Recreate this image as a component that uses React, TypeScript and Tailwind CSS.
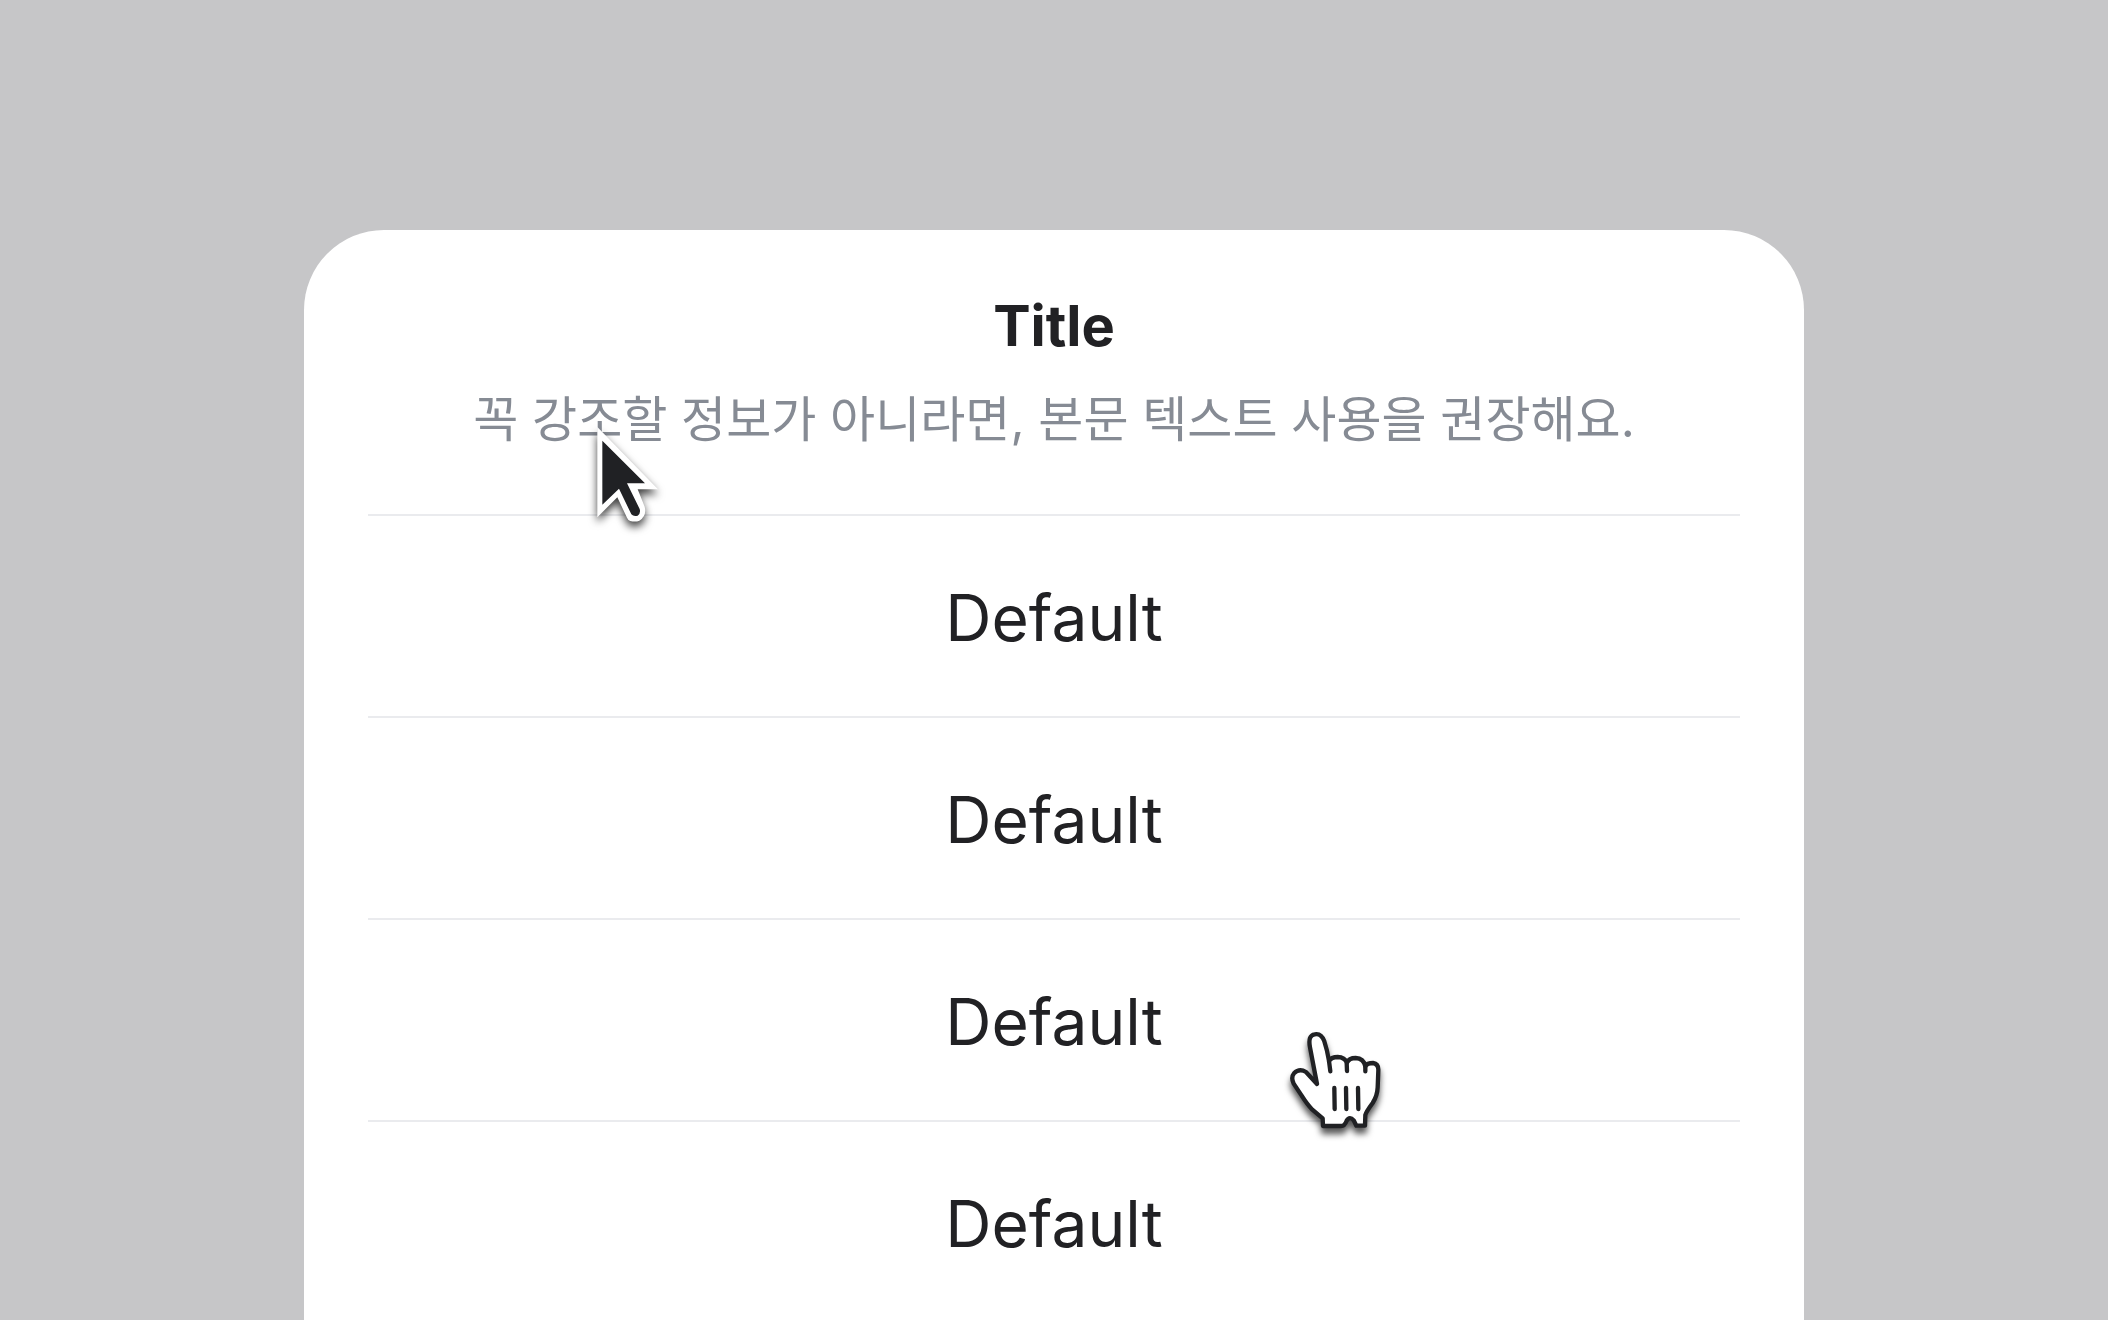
const actions = [
  { id: 1, label: "Default" },
  { id: 2, label: "Default" },
  { id: 3, label: "Default" },
  { id: 4, label: "Default" },
];

function ArrowCursor({ className }: { className: string }) {
  return (
    <svg
      viewBox="0 0 330 420"
      aria-hidden="true"
      className={`pointer-events-none h-[140px] w-[110px] overflow-visible drop-shadow-[0_5px_4px_rgba(0,0,0,0.75)] ${className}`}
    >
      <path
        d="M82 51 L264 238 H203 L224 290 Q231 318 208 332 Q196 337 181 333 Q174 331 171 323 L142 262 L82 322 Z"
        fill="#fff"
      />
      <path
        d="M97 92 L225 220 H171 L209 297 Q213 310 203 317 Q191 321 184 313 L147 236 L97 284 Z"
        fill="#202124"
      />
    </svg>
  );
}

function HandCursor({ className }: { className: string }) {
  return (
    <svg
      viewBox="0 0 390 420"
      aria-hidden="true"
      className={`pointer-events-none h-[140px] w-[130px] overflow-visible drop-shadow-[0_6px_3px_rgba(0,0,0,0.65)] ${className}`}
      stroke="#202124"
      strokeWidth="13"
      strokeLinecap="round"
      strokeLinejoin="round"
      fill="none"
    >
      <path
        d="M141 222 L120 112 Q113 76 134 73 Q154 69 163 94 Q172 121 177 153 Q184 141 203 141 Q224 142 231 158 Q237 144 257 144 Q281 145 286 169 Q292 159 309 159 Q326 162 325 181 L323 232 Q322 257 308 279 Q288 306 286 315 L285 347 H259 L251 331 Q239 317 230 332 Q224 348 213 348 H159 L158 325 L127 299 Q112 284 95 257 L71 221 Q62 202 72 190 Q88 174 108 186 Z"
        fill="#fff"
      />
      <path d="M177 153 L181 184 M230 158 L231 183 M286 166 V184" />
      <path d="M193 234 L194 297 M228 234 L229 297 M264 234 L265 297" />
    </svg>
  );
}

export default function App() {
  return (
    <main className="flex h-screen flex-col overflow-hidden bg-[#c6c6c8] pt-[230px] font-['Inter','Noto_Sans_CJK_KR',sans-serif]">
      <section
        aria-labelledby="sheet-title"
        className="mx-auto w-full max-w-[1500px] flex-1 rounded-t-[80px] bg-white px-16"
      >
        <header className="relative flex flex-col items-center gap-3 pt-14 pb-13 text-center">
          <h1 id="sheet-title" className="text-[56px] leading-20 font-bold text-[#212124]">
            Title
          </h1>
          <p className="text-[49px] leading-[84px] whitespace-nowrap text-[#868b94]">
            꼭 강조할 정보가 아니라면, 본문 텍스트 사용을 권장해요.
          </p>
          <ArrowCursor className="absolute top-[180px] left-[202px] z-10" />
        </header>
        <ul>
          {actions.map((action) => (
            <li key={action.id} className="relative border-t-2 border-[#eaebee]">
              <button
                type="button"
                className="h-[200px] w-full cursor-pointer pt-1 text-center text-[64px] leading-20 text-[#212124]"
              >
                {action.label}
              </button>
              {action.id === 3 && (
                <HandCursor className="absolute top-[90px] left-[902px] z-10" />
              )}
            </li>
          ))}
        </ul>
      </section>
    </main>
  );
}
